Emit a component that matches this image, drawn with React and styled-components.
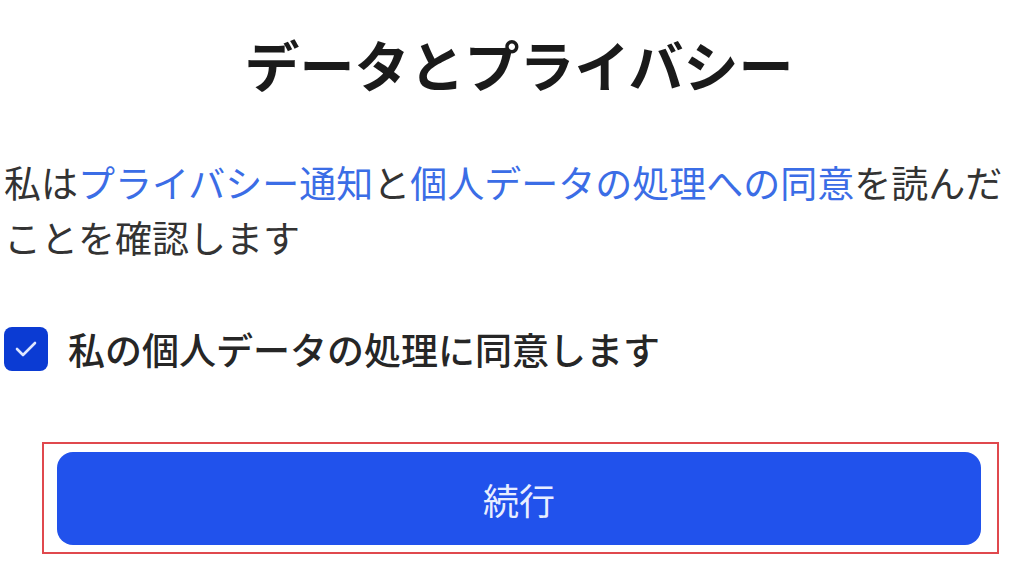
import React from 'react';
import styled, { createGlobalStyle } from 'styled-components';

const GlobalStyle = createGlobalStyle`
  html, body {
    margin: 0;
    padding: 0;
    background: #ffffff;
    overflow: hidden;
  }
  body {
    font-family: "Noto Sans CJK JP", "Noto Sans", sans-serif;
    color: #2b2b2b;
  }
`;

const Page = styled.div`
  width: 1030px;
  padding: 30px 0 0 4px;
  display: flex;
  flex-direction: column;
`;

const Title = styled.h1`
  margin: 0;
  text-align: center;
  font-size: 55px;
  line-height: 66px;
  font-weight: 700;
  color: #1a1a1a;
`;

const Notice = styled.p`
  margin: 59px 0 0;
  font-size: 37px;
  line-height: 55px;
  font-weight: 400;
  color: #333333;
`;

const Link = styled.a`
  color: #3b6de6;
  text-decoration: none;
  cursor: pointer;
`;

const ConsentRow = styled.label`
  display: flex;
  align-items: center;
  gap: 20px;
  margin-top: 59px;
  cursor: pointer;
`;

const Box = styled.span`
  flex: none;
  width: 44px;
  height: 44px;
  border-radius: 8px;
  background: ${(p) => (p.checked ? '#0b3bd3' : '#ffffff')};
  display: flex;
  align-items: center;
  justify-content: center;
`;

const ConsentText = styled.span`
  font-size: 37px;
  line-height: 50px;
  font-weight: 500;
  color: #262626;
`;

const Outline = styled.div`
  margin: 68px 0 0 38px;
  width: 957px;
  height: 112px;
  border: 2px solid #e0484d;
  box-sizing: border-box;
  padding: 8px 16px 0 13px;
`;

const ContinueButton = styled.button`
  width: 100%;
  height: 93px;
  border: none;
  border-radius: 16px;
  background: #2152ec;
  color: #e8eeff;
  font-family: inherit;
  font-size: 36px;
  font-weight: 400;
  cursor: pointer;
`;

export default function App() {
  return (
    <>
      <GlobalStyle />
      <Page>
        <Title>データとプライバシー</Title>
        <Notice>
          私は<Link>プライバシー通知</Link>と<Link>個人データの処理への同意</Link>を読んだことを確認します
        </Notice>
        <ConsentRow>
          <Box checked>
            <svg width="22" height="16" viewBox="0 0 22 16" fill="none">
              <path d="M2 8l6 6L20 2" stroke="#dfe7ff" strokeWidth="2.6" strokeLinecap="round" strokeLinejoin="round" />
            </svg>
          </Box>
          <ConsentText>私の個人データの処理に同意します</ConsentText>
        </ConsentRow>
        <Outline>
          <ContinueButton>続行</ContinueButton>
        </Outline>
      </Page>
    </>
  );
}
